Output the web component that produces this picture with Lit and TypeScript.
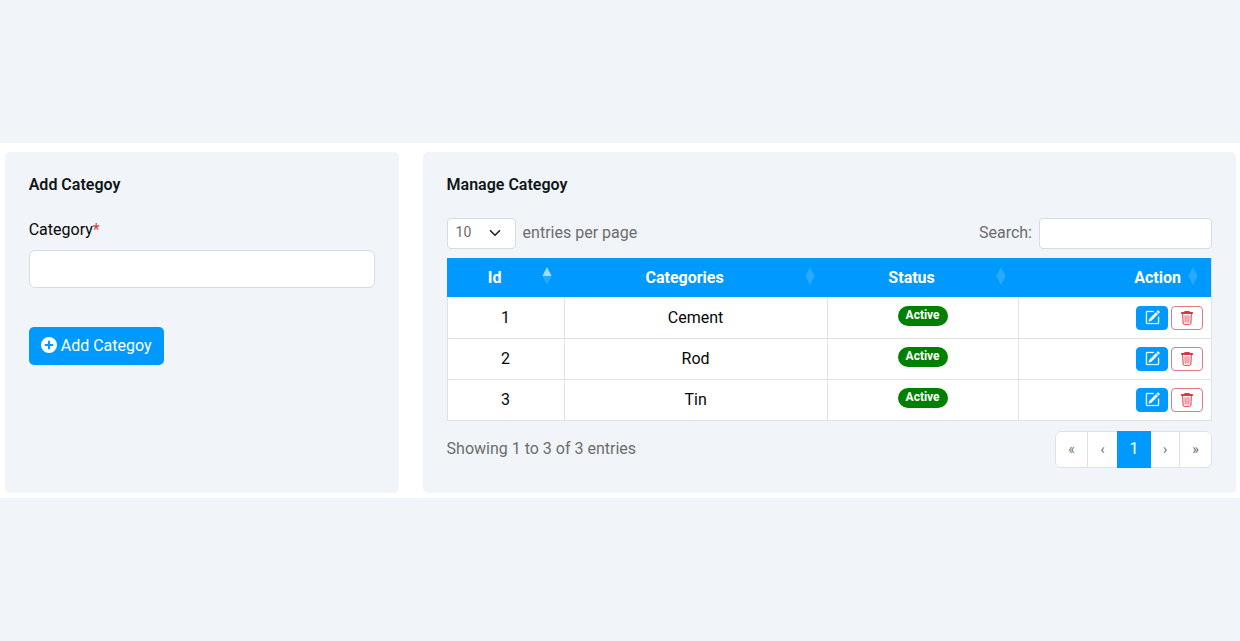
import { LitElement, html, css } from 'lit';
import { customElement, property, state } from 'lit/decorators.js';
import { classMap } from 'lit/directives/class-map.js';

interface Category {
    id: number;
    name: string;
    status: string;
}

@customElement('add-category')
export class AddCategoryElement extends LitElement {
    static styles = css`
        :host {
            display: flex;
            flex-direction: column;
            align-items: flex-start;
        }

        * {
            box-sizing: border-box;
        }

        .title {
            margin: 0;
            font-size: 16px;
            line-height: 20px;
            font-weight: 600;
            color: #10151a;
        }

        .label {
            margin-top: 25px;
            line-height: 20px;
        }

        .required {
            color: #dc3545;
        }

        .input {
            width: 346.5px;
            height: 38px;
            margin-top: 10px;
            padding: 6px 12px;
            border: 1px solid #d6dce1;
            border-radius: 6px;
            background: #fff;
            font: inherit;
        }

        .submit {
            display: flex;
            align-items: center;
            gap: 4px;
            height: 38px;
            margin-top: 39px;
            padding: 0 12px 1px;
            border: none;
            border-radius: 5px;
            background: #009aff;
            color: #fff;
            font: inherit;
            white-space: nowrap;
        }
    `;

    render() {
        return html`
            <h2 class="title">Add Categoy</h2>
            <label class="label" for="category">Category<span class="required">*</span></label>
            <input class="input" id="category" type="text">
            <button class="submit">
                <svg width="16" height="16" viewBox="0 0 16 16" fill="currentColor">
                    <path d="M16 8A8 8 0 1 1 0 8a8 8 0 0 1 16 0M9 4.6a1 1 0 0 0-2 0V7H4.6a1 1 0 0 0 0 2H7v2.4a1 1 0 0 0 2 0V9h2.4a1 1 0 0 0 0-2H9z"/>
                </svg>
                <span>Add Categoy</span>
            </button>`;
    }
}

@customElement('manage-category')
export class ManageCategoryElement extends LitElement {
    static styles = css`
        :host {
            display: block;
        }

        * {
            box-sizing: border-box;
        }

        .title {
            margin: 0;
            font-size: 16px;
            line-height: 20px;
            font-weight: 600;
            color: #10151a;
        }

        .toolbar {
            display: flex;
            justify-content: space-between;
            align-items: center;
            height: 31px;
            margin-top: 23px;
            color: #6c6c6c;
        }

        .group {
            display: flex;
            align-items: center;
            gap: 7px;
        }

        .text {
            line-height: 20px;
            padding-bottom: 1px;
        }

        .select {
            display: flex;
            justify-content: space-between;
            align-items: center;
            width: 69px;
            height: 31px;
            padding: 0 14px 0 8px;
            border: 1px solid #d6dce1;
            border-radius: 4px;
            background: #fff;
            font-size: 14px;
        }

        .value {
            padding-bottom: 2px;
        }

        .search {
            width: 173px;
            height: 31px;
            border: 1px solid #d6dce1;
            border-radius: 4px;
            background: #fff;
            font: inherit;
        }

        .table {
            margin-top: 9px;
            border: 1px solid #dee2e6;
            border-top: none;
            background: #fff;
        }

        .row {
            display: grid;
            grid-template-columns: 117px 263px 191px 1fr;
            height: 41px;
            border-top: 1px solid #dee2e6;
        }

        .row:nth-child(2) {
            border-top: none;
        }

        .head {
            height: 39px;
            margin-left: -1px;
            padding-left: 1px;
            border-top: none;
            background: #009aff;
            color: #fff;
            font-weight: 700;
        }

        .cell {
            display: flex;
            align-items: center;
            justify-content: center;
            padding-bottom: 1px;
            border-right: 1px solid #dee2e6;
        }

        .row:nth-child(2) .cell {
            padding-bottom: 0;
        }

        .row .cell:last-child {
            justify-content: flex-end;
            gap: 3px;
            padding: 0 7.6px 0 0;
            border-right: none;
        }

        .row:nth-child(2) .cell:last-child {
            padding-top: 1px;
        }

        .column {
            display: flex;
            align-items: center;
            padding-right: 13px;
        }

        .name {
            flex: 1;
            text-align: center;
        }

        .column:last-child .name {
            text-align: right;
            padding-right: 7px;
        }

        .column .sort {
            margin-bottom: 3px;
        }

        .up,
        .down {
            opacity: 0.15;
        }

        .sorted .up {
            opacity: 0.65;
        }

        .badge {
            height: 20px;
            margin-bottom: 3px;
            padding: 0 8px;
            border-radius: 10px;
            background: #008000;
            color: #fff;
            font-size: 12px;
            font-weight: 700;
            line-height: 19px;
        }

        .action {
            display: flex;
            align-items: center;
            justify-content: center;
            width: 32px;
            height: 24px;
            padding: 0;
            border: 1px solid #009aff;
            border-radius: 4px;
            background: #009aff;
            color: #fff;
        }

        .delete {
            border-color: #e57882;
            background: #fff;
            color: #dc3545;
        }

        .footer {
            display: flex;
            justify-content: space-between;
            margin-top: 10px;
            color: #6c6c6c;
        }

        .info {
            line-height: 36px;
        }

        .pages {
            display: flex;
            height: 37px;
            border: 1px solid #dee2e6;
            border-radius: 6px;
            background: #fff;
        }

        .page {
            width: 32px;
            border-left: 1px solid #dee2e6;
            font-size: 14px;
            line-height: 34px;
            text-align: center;
        }

        .page:first-child {
            width: 31px;
            border-left: none;
        }

        .narrow {
            width: 30px;
        }

        .active {
            width: 34px;
            margin: -1px 0;
            border-left: none;
            background: #009aff;
            color: #fff;
            font-size: 16px;
            line-height: 36px;
        }

        .active + .page {
            width: 28px;
            border-left: none;
        }
    `;

    @property({ type: Array }) categories: Category[] = [];
    @state() sorted = 'Id';

    renderColumn(name: string) {
        return html`
            <div class="column ${classMap({ sorted: this.sorted === name })}" @click="${() => { this.sorted = name; }}">
                <span class="name">${name}</span>
                <svg class="sort" width="10" height="18" viewBox="0 0 10 18" fill="#fff">
                    <path class="up" d="M5 0l4.6 9H.4z"/>
                    <path class="down" d="M.4 9h9.2L5 18z"/>
                </svg>
            </div>`;
    }

    renderRow(item: Category) {
        return html`
            <div class="row">
                <div class="cell">${item.id}</div>
                <div class="cell">${item.name}</div>
                <div class="cell"><span class="badge">${item.status}</span></div>
                <div class="cell">
                    <button class="action">
                        <svg width="15" height="15" viewBox="0 0 16 16" fill="currentColor" stroke="currentColor" stroke-width="0.3">
                            <path d="M15.502 1.94a.5.5 0 0 1 0 .706L14.459 3.69l-2-2L13.502.646a.5.5 0 0 1 .707 0l1.293 1.293zm-1.75 2.456-2-2L4.939 9.21a.5.5 0 0 0-.121.196l-.805 2.414a.25.25 0 0 0 .316.316l2.414-.805a.5.5 0 0 0 .196-.12l6.813-6.814z"/>
                            <path fill-rule="evenodd" d="M1 13.5A1.5 1.5 0 0 0 2.5 15h11a1.5 1.5 0 0 0 1.5-1.5v-6a.5.5 0 0 0-1 0v6a.5.5 0 0 1-.5.5h-11a.5.5 0 0 1-.5-.5v-11a.5.5 0 0 1 .5-.5H9a.5.5 0 0 0 0-1H2.5A1.5 1.5 0 0 0 1 2.5z"/>
                        </svg>
                    </button>
                    <button class="action delete">
                        <svg width="14" height="14" viewBox="0 0 14 14" fill="none" stroke="currentColor">
                            <path stroke-width="1.8" stroke-linecap="round" d="M1.8 2h10.4"/>
                            <path stroke-width="1.2" d="M5 1.2V.7h4v.5"/>
                            <path d="M2.7 3l.4 9.1q.1 1.2 1.2 1.2h5.4q1.1 0 1.2-1.2l.4-9.1"/>
                            <path stroke-width="0.8" d="M5 4.2l.2 7.4M7 4.2v7.4M9 4.2l-.2 7.4"/>
                        </svg>
                    </button>
                </div>
            </div>`;
    }

    render() {
        return html`
            <h2 class="title">Manage Categoy</h2>
            <div class="toolbar">
                <div class="group">
                    <div class="select">
                        <span class="value">10</span>
                        <svg width="12" height="12" viewBox="0 0 16 16" fill="none" stroke="#212529" stroke-width="2.2" stroke-linecap="round" stroke-linejoin="round">
                            <path d="m2 5 6 6 6-6"/>
                        </svg>
                    </div>
                    <span class="text">entries per page</span>
                </div>
                <div class="group">
                    <span class="text">Search:</span>
                    <input class="search" type="text">
                </div>
            </div>
            <div class="table">
                <div class="row head">
                    ${['Id', 'Categories', 'Status', 'Action'].map((name) => this.renderColumn(name))}
                </div>
                ${this.categories.map((item) => this.renderRow(item))}
            </div>
            <div class="footer">
                <span class="info">Showing 1 to ${this.categories.length} of ${this.categories.length} entries</span>
                <div class="pages">
                    <span class="page">«</span>
                    <span class="page narrow">‹</span>
                    <span class="page active">1</span>
                    <span class="page narrow">›</span>
                    <span class="page">»</span>
                </div>
            </div>`;
    }
}

@customElement('app-root')
export class AppRoot extends LitElement {
    static styles = css`
        :host {
            display: flex;
            align-items: center;
            height: 641px;
            background: #f1f5f9;
            color: #050709;
            font-family: Roboto, "Liberation Sans", sans-serif;
            font-size: 16px;
        }

        .content {
            box-sizing: border-box;
            display: grid;
            grid-template-columns: 394px 813.3px;
            gap: 23.9px;
            width: 100%;
            height: 355px;
            padding: 8.6px 4px 5px 4.8px;
            background: #fff;
        }

        .panel {
            padding: 23.4px 24px 22px 23.9px;
            border-radius: 5px;
            background: #f1f5f9;
        }
    `;

    categories: Category[] = [
        { id: 1, name: 'Cement', status: 'Active' },
        { id: 2, name: 'Rod', status: 'Active' },
        { id: 3, name: 'Tin', status: 'Active' },
    ];

    render() {
        return html`
            <div class="content">
                <add-category class="panel"></add-category>
                <manage-category class="panel" .categories="${this.categories}"></manage-category>
            </div>`;
    }
}
